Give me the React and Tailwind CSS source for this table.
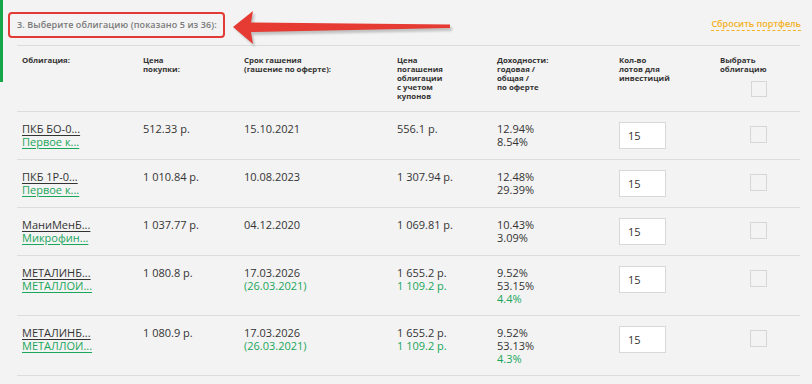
import React from "react";

const rows = [
  { name: "ПКБ БО-0...", issuer: "Первое к...", price: "512.33 р.", date: "15.10.2021", offer: null, red: "556.1 р.", red2: null, y: ["12.94%", "8.54%"], y3: null },
  { name: "ПКБ 1Р-0...", issuer: "Первое к...", price: "1 010.84 р.", date: "10.08.2023", offer: null, red: "1 307.94 р.", red2: null, y: ["12.48%", "29.39%"], y3: null },
  { name: "МаниМенБ...", issuer: "Микрофин...", price: "1 037.77 р.", date: "04.12.2020", offer: null, red: "1 069.81 р.", red2: null, y: ["10.43%", "3.09%"], y3: null },
  { name: "МЕТАЛИНБ...", issuer: "МЕТАЛЛОИ...", price: "1 080.8 р.", date: "17.03.2026", offer: "(26.03.2021)", red: "1 655.2 р.", red2: "1 109.2 р.", y: ["9.52%", "53.15%"], y3: "4.4%" },
  { name: "МЕТАЛИНБ...", issuer: "МЕТАЛЛОИ...", price: "1 080.9 р.", date: "17.03.2026", offer: "(26.03.2021)", red: "1 655.2 р.", red2: "1 109.2 р.", y: ["9.52%", "53.13%"], y3: "4.3%" },
];

const grid = "grid grid-cols-[121px_101px_153px_100px_122px_101px_1fr] pl-[5px]";

export default function App() {
  return (
    <div className="relative w-[812px] h-[384px] overflow-hidden bg-[#f3f3f3] font-['Open_Sans',sans-serif] text-[#333]">
      <div className="absolute left-0 top-0 w-[3px] h-[82px] bg-[#17a54a]" />

      <div className="flex items-start justify-between h-[45px] pl-[8px] pr-[11px] pt-[12px]">
        <div className="h-[26px] w-[217px] border-[2.5px] border-[#e23b36] rounded-[4px] pl-[7px] flex items-center text-[9px] font-semibold text-[#7a7a7a] tracking-[0.1px]">
          3. Выберите облигацию (показано 5 из 36):
        </div>
        <div className="mt-[6px] text-[9px] font-semibold text-[#f4b125] border-b border-dashed border-[#f4b125] leading-[12px]">
          Сбросить портфель
        </div>
      </div>

      <svg className="absolute left-[226px] top-[6px]" width="232" height="46" viewBox="226 6 232 46">
        <defs>
          <filter id="sh" x="-10%" y="-50%" width="120%" height="200%">
            <feGaussianBlur stdDeviation="1.2" />
          </filter>
        </defs>
        <polygon points="235,29 255,13 253,25 452,27 452,31 253,35 255,47" fill="#9a9a9a" opacity="0.55" filter="url(#sh)" />
        <polygon points="233,27 253,11 251,22.5 450,24.5 450,28 251,32 253,44" fill="#e53b33" />
      </svg>

      <div className="ml-[17px] mr-[12px] border-t border-[#dcdcdc]">
        <div className={`${grid} h-[66px] pt-[10px] text-[7.8px] font-bold leading-[9px] text-[#333] border-b border-[#dcdcdc]`}>
          <div>Облигация:</div>
          <div>Цена<br />покупки:</div>
          <div>Срок гашения<br />(гашение по оферте):</div>
          <div>Цена<br />погашения<br />облигации<br />с учетом<br />купонов</div>
          <div>Доходности:<br />годовая /<br />общая /<br />по оферте</div>
          <div>Кол-во<br />лотов для<br />инвестиций</div>
          <div className="relative">
            Выбрать<br />облигацию
            <div className="absolute left-[31px] top-[25px] w-[16px] h-[16px] border border-[#d6d6d6]" />
          </div>
        </div>

        {rows.map((r, i) => (
          <div key={i} className={`${grid} ${r.y3 ? "h-[60px]" : "h-[48px]"} pt-[10px] text-[11px] leading-[13px] border-b border-[#dcdcdc]`}>
            <div className="flex flex-col items-start">
              <span className="underline underline-offset-[2px] decoration-[#333]">{r.name}</span>
              <span className="underline underline-offset-[2px] text-[#1aa65a] decoration-[#1aa65a]">{r.issuer}</span>
            </div>
            <div>{r.price}</div>
            <div>
              <div>{r.date}</div>
              {r.offer && <div className="text-[#1aa65a]">{r.offer}</div>}
            </div>
            <div>
              <div>{r.red}</div>
              {r.red2 && <div className="text-[#1aa65a]">{r.red2}</div>}
            </div>
            <div>
              <div>{r.y[0]}</div>
              <div>{r.y[1]}</div>
              {r.y3 && <div className="text-[#1aa65a]">{r.y3}</div>}
            </div>
            <div>
              <div className="w-[47px] h-[27px] bg-white border border-[#d8d8d8] pl-[8px] flex items-center text-[11px] text-[#333]">15</div>
            </div>
            <div>
              <div className="ml-[30px] mt-[4px] w-[17px] h-[17px] border border-[#d6d6d6]" />
            </div>
          </div>
        ))}
      </div>
    </div>
  );
}
